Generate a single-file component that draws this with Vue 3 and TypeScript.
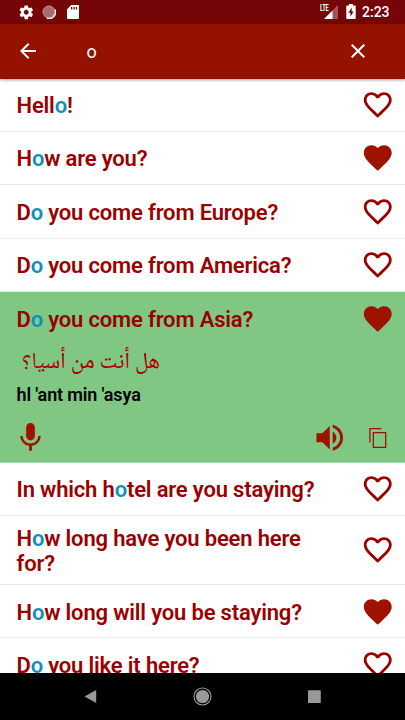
<script setup lang="ts">
interface Phrase {
  text: string
  liked: boolean
  kind?: 'open' | 'tall'
  arabic?: string
  latin?: string
}

const query = 'o'

const phrases: Phrase[] = [
  { text: 'Hello!', liked: false },
  { text: 'How are you?', liked: true },
  { text: 'Do you come from Europe?', liked: false },
  { text: 'Do you come from America?', liked: false },
  { text: 'Do you come from Asia?', liked: true, kind: 'open', arabic: 'هل أنت من أسيا؟', latin: "hl 'ant min 'asya" },
  { text: 'In which hotel are you staying?', liked: false },
  { text: 'How long have you been here for?', liked: false, kind: 'tall' },
  { text: 'How long will you be staying?', liked: true },
  { text: 'Do you like it here?', liked: false },
]

// Splits a phrase around the first occurrence of the search query.
function split(text: string): [string, string, string] {
  const at = text.indexOf(query)
  return [text.slice(0, at), query, text.slice(at + query.length)]
}

const heartFull =
  'M12 21.35l-1.45-1.32C5.4 15.36 2 12.28 2 8.5 2 5.42 4.42 3 7.5 3c1.74 0 3.41.81 4.5 2.09C13.09 3.81 14.76 3 16.5 3 19.58 3 22 5.42 22 8.5c0 3.78-3.4 6.86-8.55 11.54L12 21.35z'
const heartLine =
  'M16.5 3c-1.74 0-3.41.81-4.5 2.09C10.91 3.81 9.24 3 7.5 3 4.42 3 2 5.42 2 8.5c0 3.78 3.4 6.86 8.55 11.54L12 21.35l1.45-1.32C18.6 15.36 22 12.28 22 8.5 22 5.42 19.58 3 16.5 3zm-4.4 15.55l-.1.1-.1-.1C7.14 14.24 4 11.39 4 8.5 4 6.5 5.5 5 7.5 5c1.54 0 3.04.99 3.57 2.36h1.87C13.46 5.99 14.96 5 16.5 5c2 0 3.5 1.5 3.5 3.5 0 2.89-3.14 5.74-7.9 10.05z'
</script>

<template>
  <div class="screen">
    <header class="status">
      <svg class="gear" viewBox="0 0 24 24"><path d="M19.43 12.98c.04-.32.07-.64.07-.98s-.03-.66-.07-.98l2.11-1.65c.19-.15.24-.42.12-.64l-2-3.46c-.12-.22-.39-.3-.61-.22l-2.49 1c-.52-.4-1.08-.73-1.69-.98l-.38-2.65C14.46 2.18 14.25 2 14 2h-4c-.25 0-.46.18-.49.42l-.38 2.65c-.61.25-1.17.59-1.69.98l-2.49-1c-.23-.09-.49 0-.61.22l-2 3.46c-.13.22-.07.49.12.64l2.11 1.65c-.04.32-.07.65-.07.98s.03.66.07.98l-2.11 1.65c-.19.15-.24.42-.12.64l2 3.46c.12.22.39.3.61.22l2.49-1c.52.4 1.08.73 1.69.98l.38 2.65c.03.24.24.42.49.42h4c.25 0 .46-.18.49-.42l.38-2.65c.61-.25 1.17-.59 1.69-.98l2.49 1c.23.09.49 0 .61-.22l2-3.46c.12-.22.07-.49-.12-.64l-2.11-1.65zM12 15.5c-1.93 0-3.5-1.57-3.5-3.5s1.57-3.5 3.5-3.5 3.5 1.57 3.5 3.5-1.57 3.5-3.5 3.5z" /></svg>
      <svg class="sync" viewBox="0 0 14 14">
        <circle cx="7" cy="7" r="6.5" fill-opacity=".4" />
        <circle cx="6.7" cy="6.7" r="5.5" fill="none" stroke="#dcbcbc" stroke-width=".8" stroke-dasharray="1 1" />
        <path d="M13 4.5A6.5 6.5 0 0 1 4.8 13.2" fill="none" stroke="#fff" stroke-width="1.3" />
      </svg>
      <svg class="card" viewBox="0 0 12 14"><path fill-rule="evenodd" d="M4.3 0H11Q12 0 12 1V13Q12 14 11 14H1Q0 14 0 13V4.3ZM4 2V4.6H5.3V2ZM6.4 2V4.6H7.7V2ZM8.8 2V4.6H10.1V2Z" /></svg>
      <span class="spacer"></span>
      <span class="lte">LTE</span>
      <svg class="signal" viewBox="0 0 14 14"><path d="M14 0V14H0Z" fill-opacity=".32" /><path d="M8.5 5.5V14H0Z" /></svg>
      <svg class="battery" viewBox="0 0 10 15"><path fill-rule="evenodd" d="M3 0H7V1.5H9Q9.7 1.5 9.7 2.2V14.3Q9.7 15 9 15H1Q.3 15 .3 14.3V2.2Q.3 1.5 1 1.5H3ZM5.7 3.6L2.4 8.8H4.4V12.8L7.6 7.6H5.7Z" /></svg>
      <span class="clock">2:23</span>
    </header>

    <div class="appbar">
      <svg class="back" viewBox="0 0 24 24"><path d="M20 11H7.83l5.59-5.59L12 4l-8 8 8 8 1.41-1.41L7.83 13H20v-2z" /></svg>
      <span class="query">{{ query }}</span>
      <svg class="close" viewBox="0 0 24 24"><path d="M19 6.41L17.59 5 12 10.59 6.41 5 5 6.41 10.59 12 5 17.59 6.41 19 12 13.41 17.59 19 19 17.59 13.41 12z" /></svg>
    </div>

    <main class="list">
      <section v-for="p in phrases" :key="p.text" class="item" :class="p.kind">
        <div class="row">
          <h2 class="phrase">{{ split(p.text)[0] }}<mark>{{ split(p.text)[1] }}</mark>{{ split(p.text)[2] }}</h2>
          <svg class="heart" :class="{ liked: p.liked }" viewBox="0 0 24 24"><path :d="p.liked ? heartFull : heartLine" /></svg>
        </div>
        <template v-if="p.kind === 'open'">
          <p class="arabic" lang="ar" dir="rtl">{{ p.arabic }}</p>
          <p class="latin">{{ p.latin }}</p>
          <div class="actions">
            <svg class="mic" viewBox="0 0 24 24"><path d="M12 14c1.66 0 2.99-1.34 2.99-3L15 5c0-1.66-1.34-3-3-3S9 3.34 9 5v6c0 1.66 1.34 3 3 3zm5.3-3c0 3-2.54 5.1-5.3 5.1S6.7 14 6.7 11H5c0 3.41 2.72 6.23 6 6.72V21h2v-3.28c3.28-.48 6-3.3 6-6.72h-1.7z" /></svg>
            <svg class="speaker" viewBox="0 0 24 24"><path d="M3 9v6h4l5 5V4L7 9H3zm13.5 3c0-1.77-1.02-3.29-2.5-4.03v8.05c1.48-.73 2.5-2.25 2.5-4.02zM14 3.23v2.06c2.89.86 5 3.54 5 6.71s-2.11 5.85-5 6.71v2.06c4.01-.91 7-4.49 7-8.77s-2.99-7.86-7-8.77z" /></svg>
            <svg class="copy" viewBox="0 0 17 20"><path d="M.6 14.5V.6H12.3M4.1 4.6H16.4V19.4H4.1Z" /></svg>
          </div>
        </template>
      </section>
    </main>

    <nav class="nav">
      <svg viewBox="0 0 20 20"><path d="M3.5 9.500L15.200 3V16Z" /></svg>
      <svg viewBox="0 0 20 20"><circle cx="9.500" cy="9.500" r="6.600" /><circle cx="9.500" cy="9.500" r="8.500" fill="none" stroke="#999" stroke-width="1.100" /></svg>
      <svg viewBox="0 0 20 20"><rect x="3" y="3.300" width="12.800" height="12.800" rx=".6" /></svg>
    </nav>
  </div>
</template>

<style>
body {
  margin: 0;
  overflow: hidden;
}
</style>

<style scoped>
.screen {
  width: 405px;
  height: 720px;
  display: flex;
  flex-direction: column;
  overflow: hidden;
  background: #fff;
  font-family: Roboto, "Liberation Sans", sans-serif;
}
svg {
  display: block;
  flex: none;
}
.status {
  flex: none;
  height: 23.5px;
  box-sizing: border-box;
  padding: 0 15px 0 17.5px;
  display: flex;
  align-items: center;
  background: #760508;
  fill: #fff;
  color: #fff;
}
.gear { width: 16.5px; height: 16.5px; }
.sync { width: 14px; height: 14px; margin-left: 8px; }
.card { width: 12px; height: 14px; margin-left: 11px; }
.spacer { flex: 1; }
.lte {
  width: 14px;
  height: 15px;
  font-size: 9px;
  line-height: 8px;
  font-weight: 700;
  letter-spacing: -0.4px;
  transform: scaleX(0.64);
  transform-origin: left;
}
.signal { width: 14px; height: 14px; margin: 1px 0 0 -10px; }
.battery { width: 10px; height: 15px; margin-left: 8px; }
.clock {
  width: 28px;
  margin-left: 6px;
  font-size: 14px;
  font-weight: 500;
  line-height: 16px;
  padding-top: 1px;
}
.appbar {
  flex: none;
  height: 55px;
  box-sizing: border-box;
  padding: 0 35px 0 16px;
  display: flex;
  align-items: center;
  background: #951200;
  box-shadow: 0 1px 3px rgba(0, 0, 0, 0.4);
  z-index: 1;
  fill: #fff;
  color: #fff;
}
.back { width: 24px; height: 24px; }
.query {
  flex: 1;
  margin-left: 46.5px;
  font-size: 18px;
  line-height: 24px;
  padding-top: 1px;
}
.close { width: 24px; height: 24px; }
.list {
  flex: 1;
  min-height: 0;
  overflow: hidden;
}
.item {
  height: 53.3px;
  box-sizing: border-box;
  border-bottom: 1px solid #ebebeb;
}
.item:first-child { height: 53.5px; }
.tall { height: 69px; }
.open {
  height: 171px;
  background: #81c784;
  border-bottom-color: #a5d6a7;
}
.row {
  height: 100%;
  box-sizing: border-box;
  padding: 0 11px 0 16.5px;
  display: flex;
  align-items: center;
  justify-content: space-between;
}
.open .row { height: 53px; }
.phrase {
  margin: 2px 0 0;
  width: 306px;
  font-size: 22px;
  line-height: 25.5px;
  font-weight: 600;
  letter-spacing: -0.17px;
  color: #9b0000;
}
.phrase mark {
  background: none;
  color: #0d8fc0;
}
.heart { width: 33.5px; height: 33.5px; fill: #9b0000; }
.heart.liked { fill: #a01200; }
.arabic {
  margin: 0 0 0 22px;
  width: 138px;
  height: 38px;
  font-family: "Noto Naskh Arabic", "Noto Sans Arabic", "DejaVu Sans", sans-serif;
  font-size: 22.8px;
  line-height: 36px;
  white-space: nowrap;
  color: #a80000;
}
.latin {
  margin: 1px 0 0 16.5px;
  font-size: 18px;
  line-height: 22px;
  font-weight: 600;
  letter-spacing: -0.15px;
  color: #000;
}
.actions {
  margin-top: 14px;
  height: 36px;
  padding: 0 18.5px 0 13px;
  display: flex;
  align-items: center;
  fill: #a01200;
}
.mic { width: 35px; height: 35px; }
.speaker { width: 35.5px; height: 35.5px; margin-left: auto; }
.copy {
  width: 17.5px;
  height: 20px;
  margin-left: 22px;
  fill: none;
  stroke: #a01200;
  stroke-width: 1.3;
}
.nav {
  flex: none;
  height: 47px;
  display: flex;
  align-items: center;
  justify-content: center;
  gap: 92px;
  background: #000;
  fill: #999;
}
.nav svg { width: 20px; height: 20px; }
</style>
